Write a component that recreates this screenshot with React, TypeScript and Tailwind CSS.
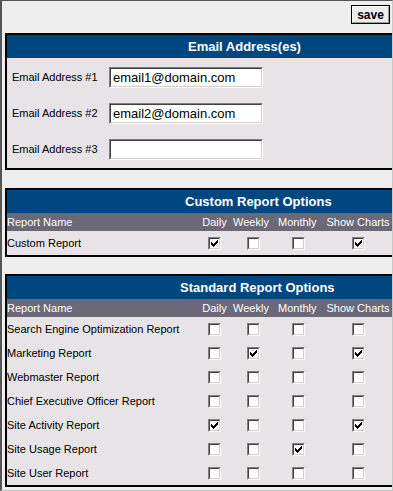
import React from "react";

const font = { fontFamily: '"Liberation Sans", Arial, sans-serif' };

function Check({ on }: { on?: boolean }) {
  return (
    <span className="inline-flex w-[13px] h-[13px] border border-t-[#808080] border-l-[#808080] border-b-white border-r-white">
      <span className="flex w-[11px] h-[11px] items-center justify-center bg-white border border-t-[#404040] border-l-[#404040] border-b-[#d4d0c8] border-r-[#d4d0c8]">
        {on && (
          <svg width="9" height="9" viewBox="0 0 9 9" shapeRendering="crispEdges">
            <rect x="7" y="1" width="1" height="1" fill="#000" />
            <rect x="6" y="2" width="2" height="1" fill="#000" />
            <rect x="1" y="3" width="1" height="1" fill="#000" />
            <rect x="5" y="3" width="3" height="1" fill="#000" />
            <rect x="1" y="4" width="2" height="1" fill="#000" />
            <rect x="4" y="4" width="3" height="1" fill="#000" />
            <rect x="1" y="5" width="5" height="1" fill="#000" />
            <rect x="2" y="6" width="3" height="1" fill="#000" />
            <rect x="3" y="7" width="1" height="1" fill="#000" />
          </svg>
        )}
      </span>
    </span>
  );
}

function Input({ value }: { value: string }) {
  return (
    <div className="w-[154px] h-[21px] border border-t-[#808080] border-l-[#808080] border-b-white border-r-white">
      <div className="h-full bg-white border border-t-[#404040] border-l-[#404040] border-b-[#d4d0c8] border-r-[#d4d0c8] pl-[2px] text-[13px] leading-[17px] text-black">
        {value}
      </div>
    </div>
  );
}

const gridCols = "grid grid-cols-[194px_27px_50px_40px_80px] items-center";

function ReportSection({
  title,
  titlePad,
  rows,
}: {
  title: string;
  titlePad: string;
  rows: { name: string; c: boolean[] }[];
}) {
  return (
    <div className="ml-[3px] w-[520px] border-2 border-black">
      <div className={`h-[23px] bg-[#00467f] text-white font-bold text-[13px] leading-[23px] ${titlePad}`}>
        {title}
      </div>
      <div className={`${gridCols} h-[18px] bg-[#6b6977] text-white text-[11px]`}>
        <span>Report Name</span>
        <span className="text-center">Daily</span>
        <span className="text-center pr-[4px]">Weekly</span>
        <span className="text-center pr-[2px]">Monthly</span>
        <span className="text-center whitespace-nowrap">Show Charts</span>
      </div>
      <div className="bg-[#e7e3e7]">
        {rows.map((r) => (
          <div key={r.name} className={`${gridCols} h-[24px] text-[11px] text-black`}>
            <span className="whitespace-nowrap">{r.name}</span>
            {r.c.map((v, i) => (
              <span key={i} className="flex justify-center">
                <Check on={v} />
              </span>
            ))}
          </div>
        ))}
      </div>
    </div>
  );
}

export default function App() {
  return (
    <div
      style={font}
      className="w-[393px] h-[491px] overflow-hidden bg-[#eeeeee] border-t border-l-2 border-r border-b border-t-[#555] border-l-[#555] border-r-[#c8c8c8] border-b-[#bdbdbd]"
    >
      <div className="flex justify-end pt-[4px] pr-[2px]">
        <div className="w-[39px] h-[19px] border border-black">
          <div className="h-full bg-[#ececec] border border-t-white border-l-white border-b-[#9a9a9a] border-r-[#9a9a9a] flex items-center justify-center text-[12px] font-bold text-black leading-none">
            save
          </div>
        </div>
      </div>

      <div className="mt-[9px] ml-[3px] w-[520px] border-2 border-black">
        <div className="h-[23px] bg-[#00467f] text-white font-bold text-[13px] leading-[23px] pl-[181px]">
          Email Address(es)
        </div>
        <div className="bg-[#e7e3e7] pt-[9px] pb-[8px] flex flex-col gap-[15px]">
          {[
            ["Email Address #1", "email1@domain.com"],
            ["Email Address #2", "email2@domain.com"],
            ["Email Address #3", ""],
          ].map(([l, v]) => (
            <div key={l} className="flex items-center">
              <span className="w-[102px] pl-[5px] text-[11px] text-black">{l}</span>
              <Input value={v} />
            </div>
          ))}
        </div>
      </div>

      <div className="mt-[18px]">
        <ReportSection
          title="Custom Report Options"
          titlePad="pl-[178px]"
          rows={[{ name: "Custom Report", c: [true, false, false, true] }]}
        />
      </div>

      <div className="mt-[17px]">
        <ReportSection
          title="Standard Report Options"
          titlePad="pl-[173px]"
          rows={[
            { name: "Search Engine Optimization Report", c: [false, false, false, false] },
            { name: "Marketing Report", c: [false, true, false, true] },
            { name: "Webmaster Report", c: [false, false, false, false] },
            { name: "Chief Executive Officer Report", c: [false, false, false, false] },
            { name: "Site Activity Report", c: [true, false, false, true] },
            { name: "Site Usage Report", c: [false, false, true, false] },
            { name: "Site User Report", c: [false, false, false, false] },
          ]}
        />
      </div>
    </div>
  );
}
